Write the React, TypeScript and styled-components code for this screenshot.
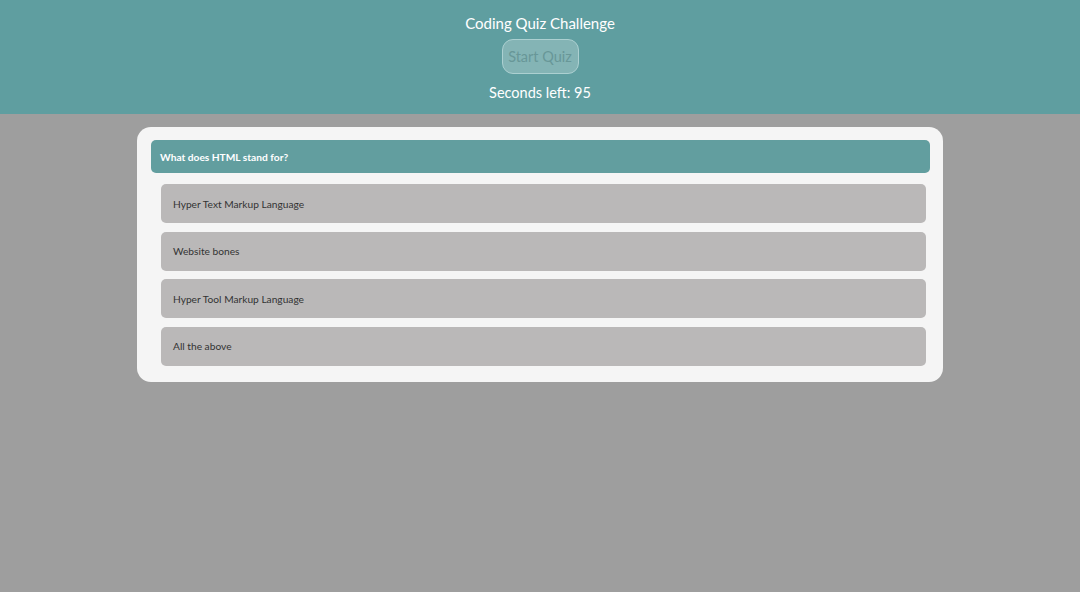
import styled, { createGlobalStyle } from 'styled-components'

const GlobalStyle = createGlobalStyle`
  html, body {
    margin: 0;
    padding: 0;
    background: #9e9e9e;
    font-family: Lato, "Noto Sans", "Liberation Sans", sans-serif;
  }
`

const Header = styled.header`
  height: 114px;
  background: #5f9ea0;
  display: flex;
  flex-direction: column;
  align-items: center;
  color: #ffffff;
  padding-top: 12px;
  box-sizing: border-box;
`

const Title = styled.h1`
  margin: 0;
  font-size: 15px;
  font-weight: 400;
  line-height: 22px;
`

const StartButton = styled.button`
  margin-top: 5px;
  width: 77px;
  height: 35px;
  border-radius: 11px;
  border: 1px solid #acd0d1;
  background: #84b4b5;
  color: #689798;
  font-family: inherit;
  font-size: 14.5px;
  padding: 0;
`

const Timer = styled.p`
  margin: 8px 0 0;
  font-size: 14.5px;
  line-height: 22px;
`

const Card = styled.main`
  width: 806px;
  margin: 13px auto 0;
  box-sizing: border-box;
  background: #f5f5f5;
  border-radius: 14px;
  padding: 13px 13px 16px 14px;
`

const Question = styled.h2`
  margin: 0;
  height: 33px;
  display: flex;
  align-items: center;
  padding-left: 9px;
  background: #629e9f;
  border-radius: 5px;
  color: #ffffff;
  font-size: 10.2px;
  font-weight: 700;
`

const Answers = styled.ul`
  list-style: none;
  margin: 11px 4px 0 10px;
  padding: 0;
  display: flex;
  flex-direction: column;
  gap: 8.67px;
`

const Answer = styled.li`
  height: 39px;
  display: flex;
  align-items: center;
  padding-left: 12px;
  background: #bab8b8;
  border-radius: 5px;
  color: #333333;
  font-size: 10.2px;
`

const answers = [
  'Hyper Text Markup Language',
  'Website bones',
  'Hyper Tool Markup Language',
  'All the above',
]

export default function App() {
  return (
    <>
      <GlobalStyle />
      <Header>
        <Title>Coding Quiz Challenge</Title>
        <StartButton>Start Quiz</StartButton>
        <Timer>Seconds left: 95</Timer>
      </Header>
      <Card>
        <Question>What does HTML stand for?</Question>
        <Answers>
          {answers.map((a) => (
            <Answer key={a}>{a}</Answer>
          ))}
        </Answers>
      </Card>
    </>
  )
}
